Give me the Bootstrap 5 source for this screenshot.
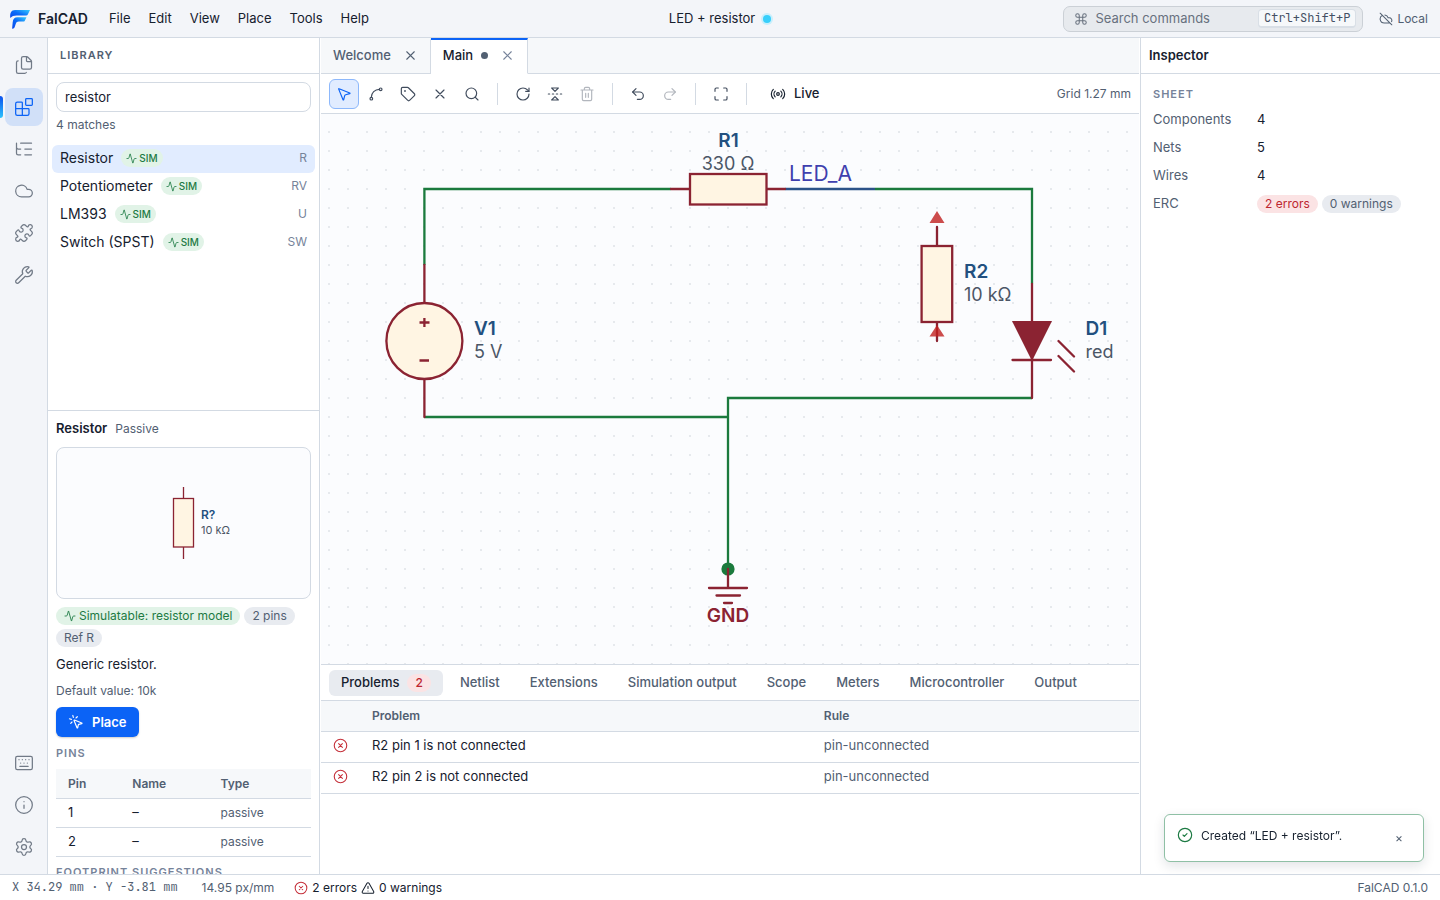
<!DOCTYPE html>
<html lang="en">
<head>
<meta charset="utf-8">
<meta name="viewport" content="width=device-width, initial-scale=1">
<title>FalCAD</title>
<link rel="stylesheet" href="https://cdn.jsdelivr.net/npm/bootstrap@5.3.0/dist/css/bootstrap.min.css">
<style>
:root{--line:#d3dae3;--ink:#16202e;--soft:#526072;--faint:#76839a;--blue:#0b63f6;--chrome:#f3f5f9;--pale:#f6f8fa;--maroon:#8b2332}
body{font-family:Inter,"Liberation Sans",sans-serif;font-size:13px;line-height:19px;color:var(--ink);background:#fff}
.app{height:100vh;min-height:600px}
.ico{width:16px;height:16px;fill:none;stroke:currentColor;stroke-width:1.75;stroke-linecap:round;stroke-linejoin:round;flex:none;display:block}
.ico-xs{width:12px;height:12px}
.ico-sm{width:14px;height:14px}
.ico-lg{width:20px;height:20px;stroke-width:1.5}
button{border:0;background:none;color:inherit;padding:0}
.soft{color:var(--soft)}.faint{color:var(--faint)}
.fs12{font-size:12px}
.mono{font-family:"JetBrains Mono","Liberation Mono",monospace}
.line-b{border-bottom:1px solid var(--line)}
.titlebar{height:38px;background:var(--chrome)}
.titlebar .side{flex:1 1 0}
.menu-btn{padding:0 9px}
.brand-name{font-size:14px;font-weight:600}
.sync{width:8px;height:8px;border-radius:50%;background:#38cffb;box-shadow:0 0 0 2px #c9effc}
.cmd{width:300px;height:26px;border:1px solid #cbd0d6;border-radius:7px;background:#e7eaee;color:#68717e;padding:0 6px 0 10px;gap:7px}
.cmd kbd{font-size:12px;line-height:16px;color:#445064;background:#f6f8fa;border:1px solid #d9dfe6;border-bottom-width:2px;border-radius:4px;padding:0 5px}
.rail{width:48px;background:var(--chrome);border-right:1px solid var(--line);color:#717a87;padding:8px 0}
.rail button{width:38px;height:38px;border-radius:8px;position:relative}
.rail .on{background:#d1e0f8;color:var(--blue)}
.rail .on::before{content:"";position:absolute;left:-5px;top:8px;width:3px;height:22px;border-radius:0 3px 3px 0;background:linear-gradient(#0b50ee,#2cc3fd)}
.library{width:272px;border-right:1px solid var(--line)}
.head{height:36px;padding:0 12px}
.caps{font-size:11px;font-weight:600;letter-spacing:1px}
.caps-row{height:32px}
.find{height:30px;border:1px solid var(--line);border-radius:8px;padding:0 8px;width:100%;font-size:13px;color:var(--ink)}
.tight{font-size:12px;line-height:17px}
.part{height:28px;border-radius:6px;padding:0 8px 2px;font-size:13px;line-height:18px;width:100%}
.part.on{background:#e1ecff}
.part .nm{font-size:14px}
.pill{display:inline-flex;align-items:center;gap:3px;height:18px;border-radius:9px;padding:0 8px;font-size:12px;line-height:18px;background:#e8ebf0;color:var(--soft)}
.pill.ok{background:#e1f3e7;color:#1d7a43}
.pill.sim{padding:0 5px;gap:2px;font-size:10px;font-weight:500}
.pill.sim .ico{width:11px;height:11px}
.pill.bad{background:#fbe3e4;color:#bd2630}
.detail{height:464px;border-top:1px solid var(--line);padding:8px;overflow:hidden}
.detail-head{height:20px}
.preview{height:152px;border:1px solid var(--line);border-radius:8px;background:#fbfcfe}
.place{height:30px;border-radius:6px;background:var(--blue);color:#fff;font-size:13px;font-weight:600;padding:0 12px;box-shadow:0 1px 2px #0003}
.grid-t{width:100%;border-collapse:collapse}
.grid-t th{font-size:12px;font-weight:600;color:var(--soft);background:var(--pale)}
.grid-t tr{border-bottom:1px solid var(--line)}
.pins th,.pins td{height:29px;padding:0 12px}
.probs th,.probs td{height:31px;padding:0 12px}
.probs th{height:30px}
.probs td{padding-bottom:3px}
.probs .ico{width:15px;height:15px}
.center{padding:0 1px}
.tabs{height:36px;background:var(--pale)}
.tab{height:36px;padding:0 12px 2px;gap:12px;border-right:1px solid var(--line);font-weight:500;color:var(--soft);border-top:2px solid transparent;border-bottom:1px solid var(--line)}
.tab span{line-height:17px}
.tab .ico{width:15px;height:15px}
.tab.on{background:#fff;color:var(--ink);border-top-color:var(--blue);border-bottom-color:#fff}
.dirty{width:7px;height:7px;border-radius:50%;background:var(--soft)}
.tools{height:40px;padding:0 8px;gap:2px;color:#414c5d}
.tools .tool{width:30px;height:30px;border-radius:6px;display:flex;align-items:center;justify-content:center;border:1px solid transparent}
.tools .on{background:#e1ecff;border-color:#8db8fb;color:var(--blue)}
.tools .tool:disabled{opacity:.4}
.live{color:var(--ink);padding:0 13px}
.sep{width:1px;height:22px;background:var(--line);margin:0 8px}
.sheet{background-color:#fbfcfe;background-image:radial-gradient(circle at 8px 18px,#e6e9ed 1px,transparent 1px);background-size:19px 19px;min-height:0}
.sheet svg{display:block;width:100%;height:100%}
.wire{stroke:#1b7a3d;fill:none;stroke-width:2.3}
.wire.lit{stroke:#2b5288}
.pn{stroke:var(--maroon);fill:none;stroke-width:2.3;stroke-linecap:round}
.body{stroke:var(--maroon);fill:#fff5e3;stroke-width:2.3}
.rf{font-size:19px;font-weight:600;fill:#22507f}
.vl{font-size:18px;fill:#4b5666}
.bottom{height:210px;border-top:1px solid var(--line)}
.ptab{height:26px;border-radius:6px;padding:0 13px;font-weight:500;color:var(--soft)}
.ptab.on{background:#e8ebf0;color:var(--ink);padding:0 12px}
.inspector{width:300px;border-left:1px solid var(--line)}
.facts{display:grid;grid-template-columns:104px 1fr;grid-auto-rows:19px;row-gap:9px}
.status{height:26px;border-top:1px solid var(--line);font-size:12px}
.err{color:#c5303a}
.note{position:fixed;right:16px;bottom:38px;width:260px;height:48px;border:1px solid #8fc0a5;border-radius:6px;background:#fff;box-shadow:0 4px 12px #1020301f;padding:12px}
</style>
</head>
<body>
<svg width="0" height="0" class="position-absolute" aria-hidden="true"><defs>
<symbol id="files" viewBox="0 0 24 24"><path d="M15 2h-4a2 2 0 0 0-2 2v11a2 2 0 0 0 2 2h8a2 2 0 0 0 2-2V8"/><path d="M16.706 2.706A2.4 2.4 0 0 0 15 2v5a1 1 0 0 0 1 1h5a2.4 2.4 0 0 0-.706-1.706z"/><path d="M5 7a2 2 0 0 0-2 2v11a2 2 0 0 0 2 2h8a2 2 0 0 0 1.732-1"/></symbol>
<symbol id="blocks" viewBox="0 0 24 24"><path d="M10 22V7a1 1 0 0 0-1-1H4a2 2 0 0 0-2 2v12a2 2 0 0 0 2 2h12a2 2 0 0 0 2-2v-5a1 1 0 0 0-1-1H2"/><rect x="14" y="2" width="8" height="8" rx="1"/></symbol>
<symbol id="tree" viewBox="0 0 24 24"><path d="M8 5h13M13 12h8M13 19h8M3 10a2 2 0 0 0 2 2h3M3 5v12a2 2 0 0 0 2 2h3"/></symbol>
<symbol id="cloud" viewBox="0 0 24 24"><path d="M17.5 19H9a7 7 0 1 1 6.71-9h1.79a4.5 4.5 0 1 1 0 9Z"/></symbol>
<symbol id="puzzle" viewBox="0 0 24 24"><path d="M15.39 4.39a1 1 0 0 0 1.68-.474 2.5 2.5 0 1 1 3.014 3.015 1 1 0 0 0-.474 1.68l1.683 1.682a2.414 2.414 0 0 1 0 3.414L19.61 15.39a1 1 0 0 1-1.68-.474 2.5 2.5 0 1 0-3.014 3.015 1 1 0 0 1 .474 1.68l-1.683 1.682a2.414 2.414 0 0 1-3.414 0L8.61 19.61a1 1 0 0 0-1.68.474 2.5 2.5 0 1 1-3.014-3.015 1 1 0 0 0 .474-1.68l-1.683-1.682a2.414 2.414 0 0 1 0-3.414L4.39 8.61a1 1 0 0 1 1.68.474 2.5 2.5 0 1 0 3.014-3.015 1 1 0 0 1-.474-1.68l1.683-1.682a2.414 2.414 0 0 1 3.414 0z"/></symbol>
<symbol id="wrench" viewBox="0 0 24 24"><path d="M14.7 6.3a1 1 0 0 0 0 1.4l1.6 1.6a1 1 0 0 0 1.4 0l3.106-3.105c.32-.322.863-.22.983.218a6 6 0 0 1-8.259 7.057l-7.91 7.91a1 1 0 0 1-2.999-3l7.91-7.91a6 6 0 0 1 7.057-8.259c.438.12.54.662.219.984z"/></symbol>
<symbol id="keyboard" viewBox="0 0 24 24"><rect x="2" y="4" width="20" height="16" rx="2"/><path d="M10 8h.01M12 12h.01M14 8h.01M16 12h.01M18 8h.01M6 8h.01M7 16h10M8 12h.01"/></symbol>
<symbol id="info" viewBox="0 0 24 24"><circle cx="12" cy="12" r="10"/><path d="M12 16v-4M12 8h.01"/></symbol>
<symbol id="gear" viewBox="0 0 24 24"><path d="M9.671 4.136a2.34 2.34 0 0 1 4.659 0 2.34 2.34 0 0 0 3.319 1.915 2.34 2.34 0 0 1 2.33 4.033 2.34 2.34 0 0 0 0 3.831 2.34 2.34 0 0 1-2.33 4.033 2.34 2.34 0 0 0-3.319 1.915 2.34 2.34 0 0 1-4.659 0 2.34 2.34 0 0 0-3.32-1.915 2.34 2.34 0 0 1-2.33-4.033 2.34 2.34 0 0 0 0-3.831A2.34 2.34 0 0 1 6.35 6.051a2.34 2.34 0 0 0 3.319-1.915"/><circle cx="12" cy="12" r="3"/></symbol>
<symbol id="pointer" viewBox="0 0 24 24"><path d="M4.037 4.688a.495.495 0 0 1 .651-.651l16 6.5a.5.5 0 0 1-.063.947l-6.124 1.58a2 2 0 0 0-1.438 1.435l-1.579 6.126a.5.5 0 0 1-.947.063z"/></symbol>
<symbol id="spline" viewBox="0 0 24 24"><circle cx="19" cy="5" r="2"/><circle cx="5" cy="19" r="2"/><path d="M5 17A12 12 0 0 1 17 5"/></symbol>
<symbol id="tag" viewBox="0 0 24 24"><path d="M12.586 2.586A2 2 0 0 0 11.172 2H4a2 2 0 0 0-2 2v7.172a2 2 0 0 0 .586 1.414l8.704 8.704a2.426 2.426 0 0 0 3.42 0l6.58-6.58a2.426 2.426 0 0 0 0-3.42z"/><circle cx="7.5" cy="7.5" r=".5" fill="currentColor"/></symbol>
<symbol id="x" viewBox="0 0 24 24"><path d="M18 6 6 18M6 6l12 12"/></symbol>
<symbol id="search" viewBox="0 0 24 24"><circle cx="11" cy="11" r="8"/><path d="m21 21-4.34-4.34"/></symbol>
<symbol id="rotate" viewBox="0 0 24 24"><path d="M21 12a9 9 0 1 1-9-9c2.52 0 4.93 1 6.74 2.74L21 8"/><path d="M21 3v5h-5"/></symbol>
<symbol id="flip" viewBox="0 0 24 24"><path d="m17 3-5 5-5-5h10M17 21l-5-5-5 5h10M4 12H2M10 12H8M16 12h-2M22 12h-2"/></symbol>
<symbol id="trash" viewBox="0 0 24 24"><path d="M10 11v6M14 11v6M19 6v14a2 2 0 0 1-2 2H7a2 2 0 0 1-2-2V6M3 6h18M8 6V4a2 2 0 0 1 2-2h4a2 2 0 0 1 2 2v2"/></symbol>
<symbol id="undo" viewBox="0 0 24 24"><path d="M9 14 4 9l5-5"/><path d="M4 9h10.5a5.5 5.5 0 0 1 0 11H11"/></symbol>
<symbol id="redo" viewBox="0 0 24 24"><path d="m15 14 5-5-5-5"/><path d="M20 9H9.5a5.5 5.5 0 0 0 0 11H13"/></symbol>
<symbol id="fit" viewBox="0 0 24 24"><path d="M8 3H5a2 2 0 0 0-2 2v3M21 8V5a2 2 0 0 0-2-2h-3M3 16v3a2 2 0 0 0 2 2h3M16 21h3a2 2 0 0 0 2-2v-3"/></symbol>
<symbol id="radio" viewBox="0 0 24 24"><path d="M16.247 7.761a6 6 0 0 1 0 8.478M19.075 4.933a10 10 0 0 1 0 14.134M4.925 19.067a10 10 0 0 1 0-14.134M7.753 16.239a6 6 0 0 1 0-8.478"/><circle cx="12" cy="12" r="2"/></symbol>
<symbol id="pulse" viewBox="0 0 24 24"><path d="M22 12h-2.48a2 2 0 0 0-1.93 1.46l-2.35 8.36a.25.25 0 0 1-.48 0L9.24 2.18a.25.25 0 0 0-.48 0l-2.35 8.36A2 2 0 0 1 4.49 12H2"/></symbol>
<symbol id="click" viewBox="0 0 24 24"><path d="M14 4.1 12 6M5.1 8l-2.9-.8M6 12l-1.9 2M7.2 2.2 8 5.1"/><path d="M9.037 9.69a.498.498 0 0 1 .653-.653l11 4.5a.5.5 0 0 1-.074.949l-4.349 1.041a1 1 0 0 0-.74.739l-1.04 4.35a.5.5 0 0 1-.95.074z"/></symbol>
<symbol id="command" viewBox="0 0 24 24"><path d="M15 6v12a3 3 0 1 0 3-3H6a3 3 0 1 0 3 3V6a3 3 0 1 0-3 3h12a3 3 0 1 0-3-3"/></symbol>
<symbol id="cloud-off" viewBox="0 0 24 24"><path d="m2 2 20 20M5.782 5.782A7 7 0 0 0 9 19h8.5a4.5 4.5 0 0 0 1.307-.193M21.532 16.5A4.5 4.5 0 0 0 17.5 10h-1.79A7.008 7.008 0 0 0 10 5.07"/></symbol>
<symbol id="error" viewBox="0 0 24 24"><circle cx="12" cy="12" r="10"/><path d="m15 9-6 6M9 9l6 6"/></symbol>
<symbol id="warn" viewBox="0 0 24 24"><path d="m21.73 18-8-14a2 2 0 0 0-3.48 0l-8 14A2 2 0 0 0 4 21h16a2 2 0 0 0 1.73-3M12 9v4M12 17h.01"/></symbol>
<symbol id="check" viewBox="0 0 24 24"><circle cx="12" cy="12" r="10"/><path d="m9 12 2 2 4-4"/></symbol>
</defs></svg>

<div class="app d-flex flex-column overflow-hidden">
  <header class="titlebar line-b d-flex align-items-center flex-shrink-0">
    <div class="side d-flex align-items-center">
      <svg class="ms-2 me-2" width="22" height="22" viewBox="0 0 22 22" aria-hidden="true">
        <defs><linearGradient id="lg1" x1="0" y1="1" x2="1" y2="0"><stop offset="0" stop-color="#0a45ea"/><stop offset=".5" stop-color="#0b6cf8"/><stop offset="1" stop-color="#35cdfd"/></linearGradient></defs>
        <path fill="url(#lg1)" d="M7 2h15l-2.200 4.600q-.4.900-1.600.900H8.800C5.800 7.500 3.700 8.300 2.300 10 1.700 5.200 3.200 2 7 2Z"/>
        <path fill="url(#lg1)" d="M9.500 9.200h9L16.800 12.700q-.4.900-1.600.900h-4.400c-1.600 0-2.500.7-3 2.200L6.600 19.300q-.3.900-1.200 1.100l-1.300.3.600-6.500c.3-3.300 1.900-5 4.800-5Z"/>
      </svg>
      <span class="brand-name me-2 pe-1">FalCAD</span>
      <nav class="d-flex" aria-label="Menu">
        <button class="menu-btn">File</button><button class="menu-btn">Edit</button><button class="menu-btn">View</button><button class="menu-btn">Place</button><button class="menu-btn">Tools</button><button class="menu-btn">Help</button>
      </nav>
    </div>
    <div class="d-flex align-items-center gap-2"><span>LED + resistor</span><span class="sync"></span></div>
    <div class="side d-flex align-items-center justify-content-end">
      <button class="cmd d-flex align-items-center me-3"><svg class="ico ico-sm"><use href="#command"/></svg><span class="me-auto">Search commands</span><kbd class="mono">Ctrl+Shift+P</kbd></button>
      <span class="d-flex align-items-center gap-1 fs12 soft pe-1 me-2"><svg class="ico ico-sm"><use href="#cloud-off"/></svg>Local</span>
    </div>
  </header>

  <main class="d-flex flex-grow-1 overflow-hidden">
    <nav class="rail d-flex flex-column align-items-center gap-1 flex-shrink-0" aria-label="Views">
      <button class="d-grid" aria-label="Files"><svg class="ico ico-lg m-auto"><use href="#files"/></svg></button>
      <button class="on d-grid" aria-label="Library"><svg class="ico ico-lg m-auto"><use href="#blocks"/></svg></button>
      <button class="d-grid" aria-label="Outline"><svg class="ico ico-lg m-auto"><use href="#tree"/></svg></button>
      <button class="d-grid" aria-label="Cloud"><svg class="ico ico-lg m-auto"><use href="#cloud"/></svg></button>
      <button class="d-grid" aria-label="Extensions"><svg class="ico ico-lg m-auto"><use href="#puzzle"/></svg></button>
      <button class="d-grid" aria-label="Tools"><svg class="ico ico-lg m-auto"><use href="#wrench"/></svg></button>
      <button class="d-grid mt-auto" aria-label="Shortcuts"><svg class="ico ico-lg m-auto"><use href="#keyboard"/></svg></button>
      <button class="d-grid" aria-label="About"><svg class="ico ico-lg m-auto"><use href="#info"/></svg></button>
      <button class="d-grid" aria-label="Settings"><svg class="ico ico-lg m-auto"><use href="#gear"/></svg></button>
    </nav>

    <aside class="library d-flex flex-column flex-shrink-0">
      <div class="head line-b d-flex align-items-center caps soft">LIBRARY</div>
      <div class="p-2 pb-0">
        <input class="find d-block" type="text" value="resistor" aria-label="Search library">
        <div class="tight soft pt-1">4 matches</div>
      </div>
      <div class="px-1 pt-2 mt-1 flex-grow-1 overflow-hidden">
        <button class="part on d-flex align-items-center gap-2"><span class="nm">Resistor</span><span class="pill ok sim"><svg class="ico"><use href="#pulse"/></svg>SIM</span><span class="ms-auto fs12 faint">R</span></button>
        <button class="part d-flex align-items-center gap-2"><span class="nm">Potentiometer</span><span class="pill ok sim"><svg class="ico"><use href="#pulse"/></svg>SIM</span><span class="ms-auto fs12 faint">RV</span></button>
        <button class="part d-flex align-items-center gap-2"><span class="nm">LM393</span><span class="pill ok sim"><svg class="ico"><use href="#pulse"/></svg>SIM</span><span class="ms-auto fs12 faint">U</span></button>
        <button class="part d-flex align-items-center gap-2"><span class="nm">Switch (SPST)</span><span class="pill ok sim"><svg class="ico"><use href="#pulse"/></svg>SIM</span><span class="ms-auto fs12 faint">SW</span></button>
      </div>
      <section class="detail flex-shrink-0">
        <div class="detail-head mb-2 d-flex align-items-baseline gap-2"><span class="fw-semibold">Resistor</span><span class="fs12 soft">Passive</span></div>
        <div class="preview mb-2">
          <svg class="d-block mx-auto" width="253" height="150" viewBox="57 448 253 150" role="img" aria-label="Resistor symbol">
            <path d="M183.500 487v12M183.500 547v12" stroke="#8b2332" stroke-width="1.300"/>
            <rect x="173.500" y="498.500" width="20" height="48.500" fill="#fff5e3" stroke="#8b2332" stroke-width="1.300"/>
            <text x="201" y="519" font-size="12" font-weight="600" fill="#22507f">R?</text>
            <text x="201" y="534" font-size="11" fill="#4b5666">10 kΩ</text>
          </svg>
        </div>
        <div class="d-flex flex-wrap gap-1 mb-2">
          <span class="pill ok"><svg class="ico ico-xs"><use href="#pulse"/></svg>Simulatable: resistor model</span><span class="pill">2 pins</span><span class="pill">Ref R</span>
        </div>
        <div>Generic resistor.</div>
        <div class="tight soft my-2">Default value: 10k</div>
        <button class="place d-flex align-items-center gap-2"><svg class="ico"><use href="#click"/></svg>Place</button>
        <div class="caps caps-row faint d-flex align-items-center">PINS</div>
        <table class="grid-t pins">
          <thead><tr><th>Pin</th><th>Name</th><th>Type</th></tr></thead>
          <tbody><tr><td>1</td><td>–</td><td class="fs12 soft">passive</td></tr><tr><td>2</td><td>–</td><td class="fs12 soft">passive</td></tr></tbody>
        </table>
        <div class="caps caps-row faint d-flex align-items-center">FOOTPRINT SUGGESTIONS</div>
      </section>
    </aside>

    <section class="center d-flex flex-column flex-grow-1 overflow-hidden">
      <div class="tabs line-b d-flex flex-shrink-0">
        <div class="tab d-flex align-items-center"><span>Welcome</span><button aria-label="Close Welcome"><svg class="ico"><use href="#x"/></svg></button></div>
        <div class="tab on d-flex align-items-center"><span class="d-flex align-items-center gap-2">Main<span class="dirty"></span></span><button class="faint" aria-label="Close Main"><svg class="ico"><use href="#x"/></svg></button></div>
      </div>
      <div class="tools line-b d-flex align-items-center flex-shrink-0">
        <button class="tool on" aria-label="Select"><svg class="ico"><use href="#pointer"/></svg></button>
        <button class="tool" aria-label="Wire"><svg class="ico"><use href="#spline"/></svg></button>
        <button class="tool" aria-label="Label"><svg class="ico"><use href="#tag"/></svg></button>
        <button class="tool" aria-label="No connect"><svg class="ico"><use href="#x"/></svg></button>
        <button class="tool" aria-label="Zoom"><svg class="ico"><use href="#search"/></svg></button>
        <span class="sep"></span>
        <button class="tool" aria-label="Rotate"><svg class="ico"><use href="#rotate"/></svg></button>
        <button class="tool" aria-label="Flip"><svg class="ico"><use href="#flip"/></svg></button>
        <button class="tool" aria-label="Delete" disabled><svg class="ico"><use href="#trash"/></svg></button>
        <span class="sep"></span>
        <button class="tool" aria-label="Undo"><svg class="ico"><use href="#undo"/></svg></button>
        <button class="tool" aria-label="Redo" disabled><svg class="ico"><use href="#redo"/></svg></button>
        <span class="sep"></span>
        <button class="tool" aria-label="Fit"><svg class="ico"><use href="#fit"/></svg></button>
        <span class="sep"></span>
        <button class="live d-flex align-items-center gap-2 fw-medium"><svg class="ico"><use href="#radio"/></svg>Live</button>
        <span class="ms-auto fs12 soft">Grid 1.27 mm</span>
      </div>
      <div class="sheet flex-grow-1">
        <svg role="img" aria-label="Schematic sheet"><g transform="translate(-321 -114)">
          <path class="wire" d="M424.400 265V189H671M875 189H1032V284M1032 398H728V569M424.400 417H728"/>
          <path class="wire lit" d="M785 189H875"/>
          <circle cx="728" cy="569" r="6.600" fill="#1b7a3d"/>
          <path class="pn" d="M671 189H690M767 189H785M424.400 265V303M424.400 379V417M937 227V246M937 322V341M1032 284V398M1012.500 360H1051M1058.500 341L1074 356.500M1058.500 356L1074 371.500M728 569V588M709 588H747M716.500 595.500H740M724 603H732"/>
          <rect class="body" x="690" y="174" width="76.500" height="30.500"/>
          <rect class="body" x="921.600" y="246" width="30.600" height="76"/>
          <circle class="body" cx="424.400" cy="341" r="38"/>
          <path class="pn" style="stroke-linecap:butt" d="M419.500 322.500H429.500M424.400 318V327M419.500 360.500H429"/>
          <path fill="#8b2332" d="M1012 321H1052L1032 361Z"/>
          <path fill="#c11f1f" fill-opacity=".8" d="M937 211L944.500 223H929.500ZM937 325L944.500 336.500H929.500Z"/>
          <g class="rf"><text x="728.500" y="147" text-anchor="middle">R1</text><text x="474" y="335">V1</text><text x="964" y="278">R2</text><text x="1085.500" y="335">D1</text><text x="728" y="622" text-anchor="middle" fill="#8b2332">GND</text></g>
          <g class="vl"><text x="728" y="170" text-anchor="middle">330 Ω</text><text x="474" y="358">5 V</text><text x="964" y="301">10 kΩ</text><text x="1085.500" y="358">red</text></g>
          <text x="789" y="181" font-size="21" fill="#3f3fae">LED_A</text>
        </g></svg>
      </div>
      <section class="bottom flex-shrink-0 overflow-hidden">
        <div class="head line-b d-flex align-items-center px-2 gap-1" role="tablist">
          <button class="ptab on d-flex align-items-center gap-2" role="tab">Problems <span class="pill bad">2</span></button>
          <button class="ptab" role="tab">Netlist</button><button class="ptab" role="tab">Extensions</button><button class="ptab" role="tab">Simulation output</button><button class="ptab" role="tab">Scope</button><button class="ptab" role="tab">Meters</button><button class="ptab" role="tab">Microcontroller</button><button class="ptab" role="tab">Output</button>
        </div>
        <table class="grid-t probs">
          <colgroup><col width="39"><col><col width="40%"></colgroup>
          <thead><tr><th></th><th>Problem</th><th>Rule</th></tr></thead>
          <tbody>
            <tr><td><svg class="ico err"><use href="#error"/></svg></td><td>R2 pin 1 is not connected</td><td class="soft">pin-unconnected</td></tr>
            <tr><td><svg class="ico err"><use href="#error"/></svg></td><td>R2 pin 2 is not connected</td><td class="soft">pin-unconnected</td></tr>
          </tbody>
        </table>
      </section>
    </section>

    <aside class="inspector flex-shrink-0">
      <div class="head line-b d-flex align-items-center px-2 fw-semibold">Inspector</div>
      <div class="px-2 mx-1 pt-1">
        <div class="caps caps-row faint d-flex align-items-center">SHEET</div>
        <div class="facts">
          <span class="soft">Components</span><span>4</span>
          <span class="soft">Nets</span><span>5</span>
          <span class="soft">Wires</span><span>4</span>
          <span class="soft">ERC</span><span class="d-flex align-items-center gap-1"><span class="pill bad">2 errors</span><span class="pill">0 warnings</span></span>
        </div>
      </div>
    </aside>
  </main>

  <footer class="status d-flex align-items-center px-2 flex-shrink-0">
    <span class="mono soft ms-1 me-4">X 34.29 mm · Y -3.81 mm</span>
    <span class="soft me-3">14.95 px/mm</span>
    <span class="d-flex align-items-center gap-1 ms-1"><svg class="ico ico-sm err"><use href="#error"/></svg>2 errors<svg class="ico ico-sm"><use href="#warn"/></svg>0 warnings</span>
    <span class="soft ms-auto me-1">FalCAD 0.1.0</span>
  </footer>
</div>

<div class="note d-flex align-items-start" role="status">
  <svg class="ico me-2" style="color:#1d7a43"><use href="#check"/></svg><span class="tight me-auto">Created “LED + resistor”.</span>
  <button class="soft fs12 me-2 align-self-center lh-1" aria-label="Dismiss">×</button>
</div>
<script src="https://cdn.jsdelivr.net/npm/bootstrap@5.3.0/dist/js/bootstrap.bundle.min.js"></script>
</body>
</html>
